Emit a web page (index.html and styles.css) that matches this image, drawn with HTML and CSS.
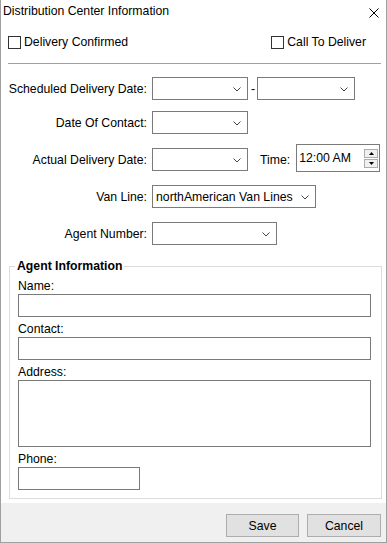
FILE: index.html
```html
<!DOCTYPE html>
<html lang="en">
<head>
  <meta charset="UTF-8">
  <meta name="viewport" content="width=device-width, initial-scale=1.0">
  <title>Distribution Center Information</title>
  <link rel="stylesheet" href="styles.css">
</head>
<body>
  <div class="window">
    <div class="titlebar">
      <span class="title">Distribution Center Information</span>
      <svg class="close" width="10" height="10" viewBox="0 0 10 10">
        <path d="M0.5 0.5 L9.5 9.5 M9.5 0.5 L0.5 9.5" stroke="#000" stroke-width="1" fill="none"/>
      </svg>
    </div>

    <div class="checks">
      <label class="check"><span class="box"></span>Delivery Confirmed</label>
      <label class="check"><span class="box"></span>Call To Deliver</label>
    </div>

    <div class="separator"></div>

    <div class="rows">
      <div class="row first">
        <span class="label">Scheduled Delivery Date:</span>
        <div class="combo w96"><span class="value"></span><svg class="chev" width="8" height="5" viewBox="0 0 8 5"><path d="M0.5 0.5 L4 4 L7.5 0.5" stroke="#444" fill="none"/></svg></div>
        <span class="dash">-</span>
        <div class="combo w98"><span class="value"></span><svg class="chev" width="8" height="5" viewBox="0 0 8 5"><path d="M0.5 0.5 L4 4 L7.5 0.5" stroke="#444" fill="none"/></svg></div>
      </div>
      <div class="row">
        <span class="label">Date Of Contact:</span>
        <div class="combo w96"><span class="value"></span><svg class="chev" width="8" height="5" viewBox="0 0 8 5"><path d="M0.5 0.5 L4 4 L7.5 0.5" stroke="#444" fill="none"/></svg></div>
      </div>
      <div class="row">
        <span class="label">Actual Delivery Date:</span>
        <div class="combo w96"><span class="value"></span><svg class="chev" width="8" height="5" viewBox="0 0 8 5"><path d="M0.5 0.5 L4 4 L7.5 0.5" stroke="#444" fill="none"/></svg></div>
        <span class="time-label">Time:</span>
        <div class="timebox">
          <span class="value">12:00 AM</span>
          <div class="spinner">
            <span class="spin"><svg width="5" height="3" viewBox="0 0 5 3"><path d="M2.5 0 L5 3 L0 3 Z" fill="#000"/></svg></span>
            <span class="spin"><svg width="5" height="3" viewBox="0 0 5 3"><path d="M0 0 L5 0 L2.5 3 Z" fill="#000"/></svg></span>
          </div>
        </div>
      </div>
      <div class="row">
        <span class="label">Van Line:</span>
        <div class="combo w164"><span class="value">northAmerican Van Lines</span><svg class="chev" width="8" height="5" viewBox="0 0 8 5"><path d="M0.5 0.5 L4 4 L7.5 0.5" stroke="#444" fill="none"/></svg></div>
      </div>
      <div class="row">
        <span class="label">Agent Number:</span>
        <div class="combo w125"><span class="value"></span><svg class="chev" width="8" height="5" viewBox="0 0 8 5"><path d="M0.5 0.5 L4 4 L7.5 0.5" stroke="#444" fill="none"/></svg></div>
      </div>
    </div>

    <fieldset class="agent">
      <legend>Agent Information</legend>
      <label class="field-label">Name:</label>
      <input type="text" class="field">
      <label class="field-label">Contact:</label>
      <input type="text" class="field">
      <label class="field-label">Address:</label>
      <textarea class="field area"></textarea>
      <label class="field-label">Phone:</label>
      <input type="text" class="field phone">
    </fieldset>

    <div class="footer">
      <button class="btn save">Save</button>
      <button class="btn cancel">Cancel</button>
    </div>
  </div>
</body>
</html>
```

FILE: styles.css
```css
* {
  box-sizing: border-box;
}
body {
  margin: 0;
  font-family: "Liberation Sans", Arial, sans-serif;
  font-size: 12.25px;
  color: #000;
  background-color: #fff;
}
.window {
  width: 387px;
  height: 543px;
  border: 1px solid #a0a0a0;
  border-top: none;
  background-color: #fff;
  display: flex;
  flex-direction: column;
}
.titlebar {
  display: flex;
  justify-content: space-between;
  align-items: flex-start;
  padding: 4px 7px 0 2px;
  line-height: 14px;
}
.close {
  margin-top: 4px;
  display: block;
}
.checks {
  display: flex;
  justify-content: space-between;
  margin-top: 17px;
  padding: 0 20px 0 7px;
  height: 15px;
}
.check {
  display: flex;
  align-items: center;
  gap: 3px;
  line-height: 15px;
}
.box {
  width: 13px;
  height: 13px;
  border: 1px solid #333;
  background-color: #fff;
}
.separator {
  height: 1px;
  margin: 13px 5px 0 7px;
  background-color: #a0a0a0;
}
.rows {
  display: flex;
  flex-direction: column;
  gap: 14px;
  margin-top: 13px;
}
.row {
  display: flex;
  align-items: center;
  height: 23px;
}
.row.first {
  margin-bottom: -3px;
}
.label {
  width: 146px;
  text-align: right;
  margin-right: 5px;
}
.combo {
  height: 23px;
  border: 1px solid #7a7a7a;
  background-color: #fff;
  display: flex;
  align-items: center;
  padding: 0 6px 0 3px;
}
.combo .value {
  flex: 1;
  white-space: nowrap;
}
.chev {
  display: block;
  margin-top: 1px;
}
.w96 { width: 96px; }
.w98 { width: 98px; }
.w164 { width: 164px; }
.w125 { width: 125px; }
.dash {
  width: 9px;
  padding-left: 3px;
}
.time-label {
  margin-left: 12px;
}
.timebox {
  margin-left: 6px;
  width: 84px;
  height: 28px;
  align-self: flex-start;
  margin-top: -4px;
  border: 1px solid #7a7a7a;
  display: flex;
  align-items: center;
  padding: 0 1px 0 2px;
}
.timebox .value {
  flex: 1;
}
.spinner {
  display: flex;
  flex-direction: column;
  gap: 1px;
  margin-top: 1px;
}
.spin {
  width: 14px;
  height: 9px;
  background-color: #f0f0f0;
  border: 1px solid #adadad;
  display: flex;
  align-items: center;
  justify-content: center;
}
.spin svg {
  display: block;
}
.agent {
  margin: 14px 4px 4px 8px;
  padding: 6px 10px 8px 8px;
  border: 1px solid #dcdcdc;
  min-width: 0;
}
.agent legend {
  font-weight: bold;
  line-height: 14px;
  padding: 0 2px;
  margin-left: -3px;
}
.field-label {
  display: block;
  line-height: 14px;
  margin: 5px 0 1px;
}
.field-label:first-of-type {
  margin-top: 0;
}
.field {
  display: block;
  width: 100%;
  height: 23px;
  border: 1px solid #7a7a7a;
  font-family: inherit;
  font-size: 12px;
  padding: 0 3px;
  margin: 0;
  outline: none;
  resize: none;
  background-color: #fff;
}
.field.area {
  height: 67px;
}
.field.phone {
  width: 122px;
}
.footer {
  flex: 1;
  background-color: #f0f0f0;
  display: flex;
  justify-content: flex-end;
  align-items: flex-start;
  gap: 8px;
  padding: 11px 5px 0 0;
}
.btn {
  height: 23px;
  background-color: #e1e1e1;
  border: 1px solid #adadad;
  font-family: inherit;
  font-size: 12.25px;
  color: #000;
  padding: 0;
  cursor: pointer;
}
.save {
  width: 73px;
}
.cancel {
  width: 74px;
}
```
